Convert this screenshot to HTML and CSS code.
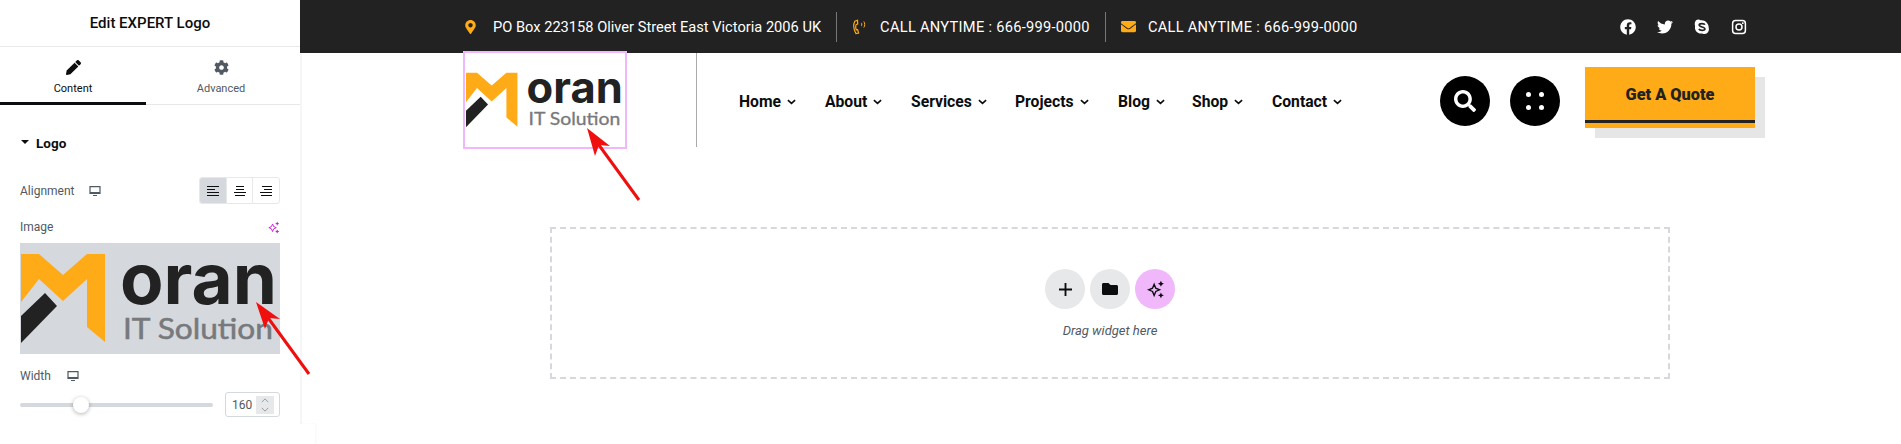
FILE: index.html
```html
<!DOCTYPE html>
<html lang="en">
<head>
<meta charset="utf-8">
<title>Edit EXPERT Logo</title>
<link rel="stylesheet" href="styles.css">
</head>
<body>
<svg class="defs" aria-hidden="true">
  <symbol id="logo" viewBox="0 0 260 111">
    <polygon fill="#ffaa17" points="1,11 19,11 43,32 67,11 85,11 85,99 67,84 67,36 43,58 19,36 1,59"/>
    <polygon fill="#222" points="25,50 37,63 1,100 1,73"/>
    <text x="100" y="61" font-family="Inter" font-weight="700" font-size="70" fill="#222" textLength="157" lengthAdjust="spacingAndGlyphs">oran</text>
    <text x="103" y="96" font-family="Lato" font-weight="400" font-size="28" fill="#77797c" stroke="#77797c" stroke-width=".5" textLength="150" lengthAdjust="spacingAndGlyphs">IT Solution</text>
  </symbol>
  <symbol id="monitor" viewBox="0 0 12 12">
    <path fill="none" stroke="currentColor" stroke-width="1.2" d="M1 1.6h10v6.8H1z"/>
    <path fill="currentColor" d="M1 7h10v1.6H1zM4 10h4v1H4z"/>
  </symbol>
  <symbol id="sparkle" viewBox="0 0 14 14">
    <path fill="none" stroke="currentColor" stroke-width="1" d="M6 3.200 7.200 6 10 7.200 7.200 8.400 6 11.400 4.800 8.400 2 7.200 4.800 6z"/>
    <path fill="currentColor" d="M11 .6l.7 1.500 1.500.7-1.500.7-.7 1.500-.7-1.500-1.500-.7 1.500-.7zM11 9.200l.7 1.400 1.500.7-1.500.7-.7 1.500-.7-1.500-1.500-.7 1.500-.7z"/>
  </symbol>
  <symbol id="chev" viewBox="0 0 10 6">
    <path fill="none" stroke="currentColor" stroke-width="1.8" d="M1 1l4 3.600L9 1"/>
  </symbol>
</svg>

<div class="app">
  <aside class="panel">
    <h1 class="panel-title">Edit EXPERT Logo</h1>
    <div class="tabs">
      <div class="tab tab-active">
        <svg class="tab-icon" viewBox="0 0 512 512"><path fill="currentColor" d="M497.9 142.1l-46.1 46.1c-4.7 4.7-12.3 4.7-17 0l-111-111c-4.7-4.7-4.7-12.3 0-17l46.1-46.1c18.7-18.7 49.1-18.7 67.9 0l60.1 60.1c18.8 18.7 18.8 49.1 0 67.9zM284.2 99.8L21.6 362.4.4 483.9c-2.9 16.4 11.4 30.6 27.8 27.8l121.5-21.3 262.6-262.6c4.7-4.7 4.7-12.3 0-17l-111-111c-4.8-4.7-12.4-4.7-17.1 0z"/></svg>
        <span>Content</span>
      </div>
      <div class="tab">
        <svg class="tab-icon" viewBox="0 0 512 512"><path fill="currentColor" d="M487.4 315.7l-42.6-24.6c4.3-23.2 4.3-47 0-70.2l42.6-24.6c4.9-2.8 7.1-8.6 5.5-14-11.1-35.6-30-67.8-54.7-94.6-3.8-4.1-10-5.1-14.8-2.3L380.8 110c-17.9-15.4-38.5-27.3-60.8-35.1V25.8c0-5.6-3.9-10.5-9.4-11.7-36.7-8.2-74.3-7.8-109.2 0-5.5 1.2-9.4 6.1-9.4 11.7V75c-22.2 7.9-42.8 19.8-60.8 35.1L88.7 85.5c-4.9-2.8-11-1.9-14.8 2.3-24.7 26.7-43.6 58.9-54.7 94.6-1.7 5.4.6 11.2 5.5 14L67.3 221c-4.3 23.2-4.3 47 0 70.2l-42.6 24.6c-4.9 2.8-7.1 8.6-5.5 14 11.1 35.6 30 67.8 54.7 94.6 3.8 4.1 10 5.1 14.8 2.3l42.6-24.6c17.9 15.4 38.5 27.3 60.8 35.1v49.2c0 5.6 3.9 10.5 9.4 11.7 36.7 8.2 74.3 7.8 109.2 0 5.5-1.2 9.4-6.1 9.4-11.7v-49.2c22.2-7.9 42.8-19.8 60.8-35.1l42.6 24.6c4.9 2.8 11 1.9 14.8-2.3 24.7-26.7 43.6-58.9 54.7-94.6 1.5-5.5-.7-11.3-5.6-14.1zM256 336c-44.1 0-80-35.9-80-80s35.9-80 80-80 80 35.9 80 80-35.9 80-80 80z"/></svg>
        <span>Advanced</span>
      </div>
    </div>
    <div class="controls">
      <div class="section-head"><i class="caret"></i>Logo</div>
      <div class="row row-align">
        <span class="label">Alignment</span>
        <svg class="mon"><use href="#monitor"/></svg>
        <div class="choices">
          <div class="choice"><svg class="lines" viewBox="0 0 12 10"><path stroke="currentColor" stroke-width="1" d="M0 .5h12M0 3.5h8M0 6.5h12M0 9.5h12"/></svg></div>
          <div class="choice"><svg class="lines" viewBox="0 0 12 10"><path stroke="currentColor" stroke-width="1" d="M2 .5h8M2 3.500h8M0 6.500h12M1 9.500h10"/></svg></div>
          <div class="choice"><svg class="lines" viewBox="0 0 12 10"><path stroke="currentColor" stroke-width="1" d="M2 .5h10M4 3.500h8M0 6.500h12M1 9.500h11"/></svg></div>
        </div>
      </div>
      <div class="row row-image">
        <span class="label">Image</span>
        <svg class="spark-pink"><use href="#sparkle"/></svg>
      </div>
      <svg class="preview"><use href="#logo"/></svg>
      <div class="row row-width">
        <span class="label">Width</span>
        <svg class="mon"><use href="#monitor"/></svg>
      </div>
      <div class="slider-row">
        <div class="track"><i class="thumb"></i></div>
        <div class="num">
          <span>160</span>
          <div class="spin">
            <svg class="spin-ic" viewBox="0 0 10 6"><path fill="none" stroke="currentColor" d="M1 5l4-4 4 4"/></svg>
            <svg class="spin-ic" viewBox="0 0 10 6"><path fill="none" stroke="currentColor" d="M1 1l4 4 4-4"/></svg>
          </div>
        </div>
      </div>
    </div>
  </aside>

  <main class="main">
    <div class="topbar">
      <div class="info info-first">
        <svg class="ic-pin" viewBox="0 0 384 512"><path fill="currentColor" d="M172.268 501.67C26.97 291.031 0 269.413 0 192 0 85.961 85.961 0 192 0s192 85.961 192 192c0 77.413-26.97 99.031-172.268 309.67-9.535 13.774-29.93 13.773-39.464 0zM192 272c44.183 0 80-35.817 80-80s-35.817-80-80-80-80 35.817-80 80 35.817 80 80 80z"/></svg>
        <span>PO Box 223158 Oliver Street East Victoria 2006 UK</span>
      </div>
      <div class="info">
        <svg class="ic-phone" viewBox="0 0 14 16"><path fill="none" stroke="currentColor" stroke-width="1.2" d="M5.500 1.200 2.800 2.200C1.200 5.600 1.600 10.600 4 14.600l2.600-.6-1-3.400-1.400.3C3.600 9.200 3.600 7 4.200 5.400l1.500-.4z"/><path fill="currentColor" d="M9.500 3.500c1 .8 1 3.200 0 4-.4-1-.4-3 0-4z"/><path fill="none" stroke="currentColor" d="M11.800 2.500c1.200 1.400 1.200 4.600 0 6"/></svg>
        <span class="call">CALL ANYTIME : 666-999-0000</span>
      </div>
      <div class="info info-last">
        <svg class="ic-mail" viewBox="0 0 512 512"><path fill="currentColor" d="M502.3 190.8c3.9-3.1 9.7-.2 9.7 4.7V400c0 26.5-21.5 48-48 48H48c-26.5 0-48-21.5-48-48V195.6c0-5 5.7-7.8 9.7-4.7 22.4 17.4 52.1 39.5 154.1 113.6 21.1 15.4 56.7 47.8 92.2 47.6 35.7.3 72-32.8 92.3-47.6 102-74.1 131.6-96.3 154-113.7zM256 320c23.2.4 56.6-29.2 73.4-41.4 132.7-96.3 142.8-104.7 173.4-128.7 5.8-4.5 9.2-11.5 9.2-18.9v-19c0-26.5-21.5-48-48-48H48C21.5 64 0 85.5 0 112v19c0 7.4 3.4 14.3 9.2 18.9 30.6 23.9 40.7 32.4 173.4 128.7 16.8 12.2 50.2 41.8 73.4 41.4z"/></svg>
        <span class="call">CALL ANYTIME : 666-999-0000</span>
      </div>
      <div class="social">
        <svg class="soc" viewBox="0 0 512 512"><path fill="currentColor" d="M504 256C504 119 393 8 256 8S8 119 8 256c0 123.78 90.69 226.38 209.25 245V327.69h-63V256h63v-54.64c0-62.15 37-96.48 93.67-96.48 27.14 0 55.52 4.84 55.52 4.84v61h-31.28c-30.8 0-40.41 19.12-40.41 38.73V256h68.78l-11 71.69h-57.78V501C413.31 482.38 504 379.78 504 256z"/></svg>
        <svg class="soc" viewBox="0 0 512 512"><path fill="currentColor" d="M459.37 151.716c.325 4.548.325 9.097.325 13.645 0 138.72-105.583 298.558-298.558 298.558-59.452 0-114.68-17.219-161.137-47.106 8.447.974 16.568 1.299 25.34 1.299 49.055 0 94.213-16.568 130.274-44.832-46.132-.975-84.792-31.188-98.112-72.772 6.498.974 12.995 1.624 19.818 1.624 9.421 0 18.843-1.3 27.614-3.573-48.081-9.747-84.143-51.98-84.143-102.985v-1.299c13.969 7.797 30.214 12.67 47.431 13.319-28.264-18.843-46.781-51.005-46.781-87.391 0-19.492 5.197-37.36 14.294-52.954 51.655 63.675 129.3 105.258 216.365 109.807-1.624-7.797-2.599-15.918-2.599-24.04 0-57.828 46.782-104.934 104.934-104.934 30.213 0 57.502 12.67 76.67 33.137 23.715-4.548 46.456-13.32 66.599-25.34-7.798 24.366-24.366 44.833-46.132 57.827 21.117-2.273 41.584-8.122 60.426-16.243-14.292 20.791-32.161 39.308-52.628 54.253z"/></svg>
        <svg class="soc" viewBox="0 0 16 16"><path fill="currentColor" d="M4.200.6c1 0 1.800.3 2.400.7C10.600.6 15 4.400 14.700 8.800c.9 2.800-.9 6.500-4.800 6.200-.7 0-1.300-.2-1.900-.5C4 15.200 0 11.500 1.100 6.900.1 4.100 1.500.6 4.200.6z"/><path fill="none" stroke="#222" stroke-width="1.700" d="M11 5.700C10.300 4.400 5.200 4 5.200 6.100c0 2.300 5.700 1.400 5.700 3.800 0 2.100-5.100 1.900-6-.1"/></svg>
        <svg class="soc" viewBox="0 0 16 16"><rect x="1.600" y="1.600" width="12.800" height="12.800" rx="3" fill="none" stroke="currentColor" stroke-width="1.500"/><circle cx="8" cy="8" r="3" fill="none" stroke="currentColor" stroke-width="1.500"/><circle cx="11.800" cy="4.200" r=".9" fill="currentColor"/></svg>
      </div>
    </div>

    <header class="site-head">
      <div class="logo-col">
        <svg class="logo"><use href="#logo"/></svg>
        <i class="select-box"></i>
      </div>
      <nav class="nav">
        <a class="nav-item nav-home">Home<svg class="chev"><use href="#chev"/></svg></a>
        <a class="nav-item nav-about">About<svg class="chev"><use href="#chev"/></svg></a>
        <a class="nav-item nav-services">Services<svg class="chev"><use href="#chev"/></svg></a>
        <a class="nav-item nav-projects">Projects<svg class="chev"><use href="#chev"/></svg></a>
        <a class="nav-item nav-blog">Blog<svg class="chev"><use href="#chev"/></svg></a>
        <a class="nav-item nav-shop">Shop<svg class="chev"><use href="#chev"/></svg></a>
        <a class="nav-item">Contact<svg class="chev"><use href="#chev"/></svg></a>
      </nav>
      <div class="tools">
        <div class="round"><svg class="ic-search" viewBox="0 0 512 512"><path fill="currentColor" d="M505 442.7L405.3 343c-4.5-4.5-10.6-7-17-7H372c27.6-35.3 44-79.7 44-128C416 93.1 322.9 0 208 0S0 93.1 0 208s93.1 208 208 208c48.3 0 92.7-16.4 128-44v16.3c0 6.4 2.5 12.5 7 17l99.7 99.7c9.4 9.4 24.6 9.4 33.9 0l28.3-28.3c9.4-9.4 9.4-24.6.1-34zM208 336c-70.7 0-128-57.2-128-128 0-70.7 57.2-128 128-128 70.7 0 128 57.2 128 128 0 70.7-57.2 128-128 128z"/></svg></div>
        <div class="round"><div class="dots"><i></i><i></i><i></i><i></i></div></div>
        <div class="quote">Get A Quote</div>
      </div>
    </header>

    <section class="dropzone">
      <div class="drop-btns">
        <div class="drop-btn"><svg class="ic-plus" viewBox="0 0 14 14"><path stroke="currentColor" stroke-width="2" d="M7 0v14M0 7h14"/></svg></div>
        <div class="drop-btn"><svg class="ic-folder" viewBox="0 0 512 512"><path fill="currentColor" d="M464 128H272l-64-64H48C21.49 64 0 85.49 0 112v288c0 26.51 21.49 48 48 48h416c26.51 0 48-21.49 48-48V176c0-26.51-21.49-48-48-48z"/></svg></div>
        <div class="drop-btn drop-btn-ai"><svg class="ic-spark"><use href="#sparkle"/></svg></div>
      </div>
      <p class="drop-text">Drag widget here</p>
    </section>
  </main>

  <i class="panel-edge"></i>
  <i class="panel-foot"></i>
  <svg class="arrows" viewBox="0 0 1901 444">
    <path stroke="#f00f0f" stroke-width="3" d="M639 200 596 141M309 374 266 315"/>
    <polygon fill="#f00f0f" points="587,128 595,156 599,145 610,146"/>
    <polygon fill="#f00f0f" points="256,302 265,329 269,318 280,319"/>
  </svg>
</div>
</body>
</html>
```
FILE: styles.css
```css
* { box-sizing: border-box; }
html, body { margin: 0; height: 444px; overflow: hidden; background: #fff; }
body { font-family: "Roboto", "Liberation Sans", sans-serif; }
.defs { display: none; }
.app { position: relative; display: flex; width: 1901px; height: 444px; }

/* Editor panel */
.panel { flex: 0 0 300px; height: 424px; background: #fff; color: #515962; }
.panel-title { margin: 0; height: 47px; line-height: 46px; text-align: center; font-size: 15px; font-weight: 500; color: #0c0d0e; border-bottom: 1px solid #e6e8ea; }
.tabs { display: flex; height: 58px; border-bottom: 1px solid #e6e8ea; }
.tab { flex: 0 0 150px; display: flex; flex-direction: column; align-items: center; padding-top: 13px; font-size: 11px; color: #515962; }
.tab-active { flex-basis: 146px; color: #0c0d0e; border-bottom: 3px solid #0c0d0e; height: 58px; }
.tab-icon { width: 15px; height: 15px; margin-bottom: 7px; }
.tab span { line-height: 13px; }
.controls { padding: 0 20px; }
.section-head { display: flex; align-items: center; height: 16px; margin-top: 30px; font-size: 13.5px; font-weight: 700; color: #0c0d0e; }
.caret { width: 0; height: 0; margin: 0 7px 2px 1px; border: 4px solid transparent; border-top: 4px solid #0c0d0e; border-bottom: 0; }
.row { display: flex; align-items: center; font-size: 12px; }
.label { line-height: 14px; }
.mon { width: 12px; height: 12px; margin-left: 15px; color: #515962; }
.row-align { margin-top: 26px; height: 27px; }
.row-width .mon { margin-left: 16px; }
.choices { display: flex; width: 81px; margin-left: auto; height: 27px; border: 1px solid #e6e8ea; border-radius: 3px; overflow: hidden; }
.choice { display: flex; flex: 1; align-items: center; justify-content: center; color: #0c0d0e; border-left: 1px solid #e6e8ea; }
.choice:first-child { border-left: 0; background: #d5d8dc; }
.lines { width: 12px; height: 10px; }
.row-image { justify-content: space-between; margin-top: 16px; height: 14px; }
.spark-pink { width: 13px; height: 13px; color: #c71fd0; }
.preview { display: block; width: 260px; height: 111px; margin-top: 9px; background: #d5d8dc; }
.row-width { margin-top: 15px; height: 14px; }
.slider-row { display: flex; align-items: center; justify-content: space-between; margin-top: 9px; height: 25px; }
.track { position: relative; width: 193px; height: 4px; border-radius: 2px; background: #d5d8dc; }
.thumb { position: absolute; left: 53px; top: -6px; width: 16px; height: 16px; border-radius: 50%; background: #fff; box-shadow: 0 1px 4px rgba(0,0,0,.3); }
.num { display: flex; align-items: center; justify-content: space-between; width: 55px; height: 25px; padding: 0 5px 0 6px; border: 1px solid #d5d8dc; border-radius: 3px; font-size: 12px; }
.spin { display: flex; flex-direction: column; align-items: center; justify-content: space-around; width: 18px; height: 18px; background: #e6e8ea; color: #818a96; }
.spin-ic { width: 8px; height: 5px; }

/* Page */
.main { flex: 1; display: flex; flex-direction: column; min-width: 0; }
.topbar { display: flex; align-items: center; height: 53px; padding: 0 154px 0 165px; background: #222; color: #fff; font-size: 14.65px; }
.info { display: flex; align-items: center; height: 30px; padding: 0 15px; border-right: 1px solid #777; }
.info span { white-space: nowrap; }
.call { letter-spacing: .28px; }
.info-first { padding-left: 0; }
.info-last { border-right: 0; }
.ic-pin { width: 11px; height: 14px; margin-right: 17px; color: #ffaa17; }
.ic-phone { width: 14px; height: 16px; margin-right: 14px; color: #ffaa17; }
.ic-mail { width: 15px; height: 15px; margin-right: 12px; color: #ffaa17; }
.social { display: flex; align-items: center; gap: 21px; margin-left: auto; color: #fff; }
.soc { width: 16px; height: 16px; }

.site-head { display: flex; align-items: flex-start; height: 94px; }
.logo-col { position: relative; flex: 0 0 232px; margin-left: 165px; height: 94px; padding-top: 13px; border-right: 1px solid #aaa; }
.logo { display: block; width: 160px; height: 68px; }
.select-box { position: absolute; left: -2px; top: -2px; width: 164px; height: 98px; border: 2px solid #f0b8fb; }
.nav { display: flex; align-items: center; margin: 39px 0 0 42px; font-size: 15.7px; font-weight: 700; color: #0c0d0e; }
.nav-item { display: flex; align-items: center; width: 86px; white-space: nowrap; }
.nav-services { width: 104px; }
.nav-projects { width: 103px; }
.nav-blog { width: 74px; }
.nav-shop { width: 80px; }
.chev { width: 9px; height: 6px; margin-left: 6px; }
.tools { display: flex; align-items: flex-start; margin: 14px 146px 0 auto; }
.round { display: flex; align-items: center; justify-content: center; width: 50px; height: 50px; margin: 9px 20px 0 0; border-radius: 50%; background: #000; color: #fff; }
.round + .round { margin-right: 25px; }
.ic-search { width: 22px; height: 22px; }
.dots { display: grid; grid-template-columns: 5px 5px; gap: 8px; }
.dots i { width: 5px; height: 5px; border-radius: 50%; background: #fff; }
.quote { width: 170px; height: 61px; padding-top: 18px; text-align: center; font-size: 16.3px; font-weight: 900; line-height: 19px; color: #222; background: linear-gradient(#ffaa17 53px, #222 53px, #222 56px, #ffaa17 56px); box-shadow: 10px 10px 0 #e6e6e6; }

.dropzone { display: flex; flex-direction: column; align-items: center; width: 1120px; height: 152px; margin: 80px 0 0 250px; padding-top: 40px; border: 2px dashed #d5d8dc; }
.drop-btns { display: flex; gap: 5px; }
.drop-btn { display: flex; align-items: center; justify-content: center; width: 40px; height: 40px; border-radius: 50%; background: #e6e8ea; color: #0c0d0e; }
.drop-btn-ai { background: #f0b8fb; }
.ic-plus { width: 13px; height: 13px; }
.ic-folder { width: 16px; height: 16px; }
.ic-spark { width: 19px; height: 19px; }
.drop-text { margin: 14px 0 0; font-size: 13px; font-style: italic; line-height: 16px; color: #515962; }

/* Overlays */
.panel-edge { position: absolute; left: 300px; top: 53px; width: 2px; height: 371px; background: #f6f6f7; }
.panel-foot { position: absolute; left: 300px; top: 424px; width: 15px; height: 20px; background: #fff; box-shadow: 1px 0 2px rgba(0,0,0,.04); }
.arrows { position: absolute; left: 0; top: 0; width: 1901px; height: 444px; pointer-events: none; }
```
